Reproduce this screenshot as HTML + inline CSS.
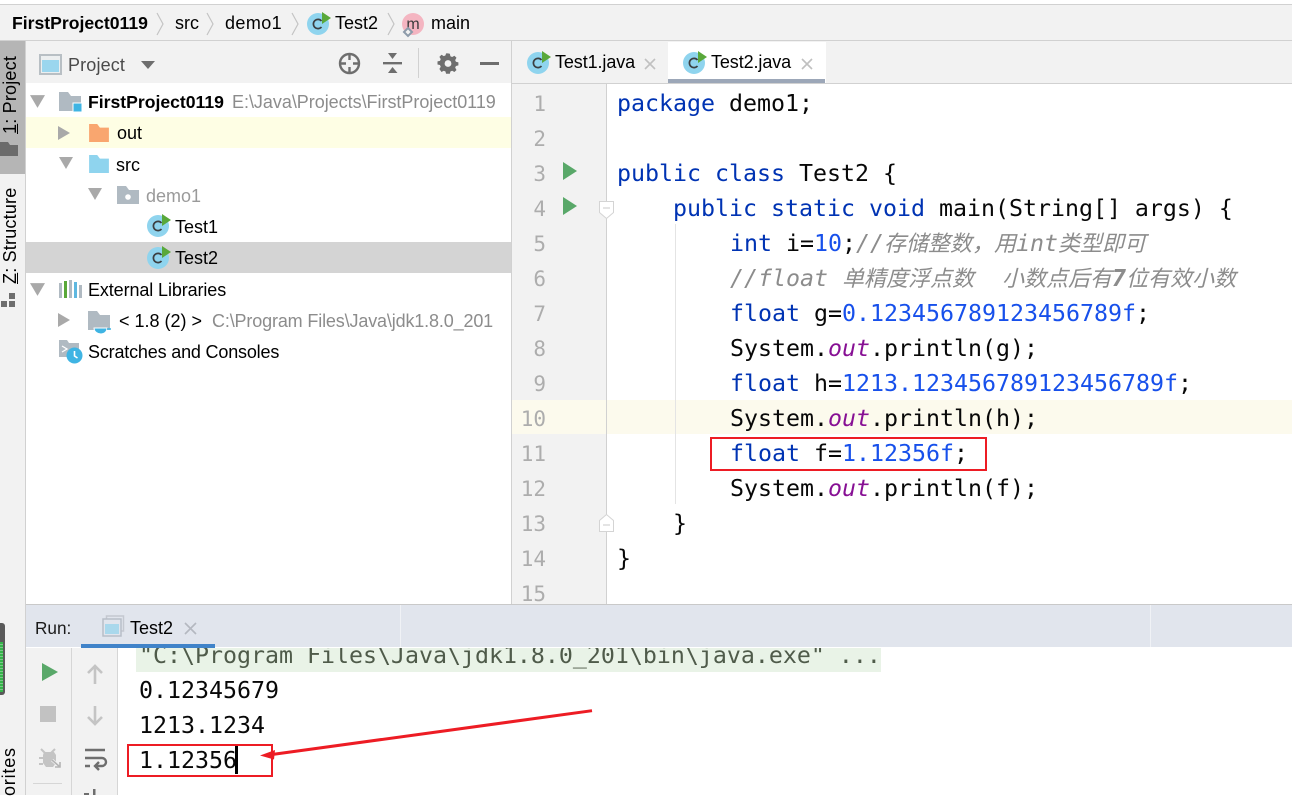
<!DOCTYPE html>
<html><head><meta charset="utf-8">
<style>
html,body{margin:0;padding:0;background:#fff}
body{width:1292px;height:795px;overflow:hidden;position:relative;font-family:"Liberation Sans","Noto Sans CJK SC",sans-serif;font-size:18px;color:#000}
.a{position:absolute}
.t{position:absolute;white-space:pre;line-height:30px;height:30px}
.g{color:#808080}
.c{position:absolute;left:0;white-space:pre;font-family:"DejaVu Sans Mono",monospace;font-size:23.26px;line-height:35px;height:35px;color:#080808}
.k{color:#0033b3}.n{color:#1750eb}.o{color:#871094;font-style:italic}
.m{color:#8c8c8c;font-style:italic}
.z{font-family:"Noto Sans CJK SC",sans-serif;font-size:22px;line-height:0;color:#8c8c8c;font-style:italic}
.ln{position:absolute;left:512px;width:34px;text-align:right;font-family:"DejaVu Sans Mono",monospace;font-size:21px;line-height:35px;color:#adadad}
.v{position:absolute;white-space:pre;transform-origin:0 0;transform:rotate(-90deg);font-size:18px;line-height:24px;letter-spacing:.2px}
svg{position:absolute;overflow:visible}
</style></head><body>
<svg width="0" height="0" style="position:absolute">
<defs>
<symbol id="cls" viewBox="0 0 24 24" overflow="visible"><circle cx="11" cy="13" r="11" fill="#8fd4ee"/><path d="M14.5 10a4.6 4.6 0 1 0 0 6" fill="none" stroke="#3c3f41" stroke-width="1.7"/><path d="M15 1l9 6-9 6z" fill="#59a83a"/></symbol>
<symbol id="fold" viewBox="0 0 22 20" overflow="visible"><path d="M0 0h9l3 4h10v16H0z" fill="currentColor"/></symbol>
<symbol id="run" viewBox="0 0 14 16" overflow="visible"><path d="M0 0l14 8-14 8z" fill="#59a869"/></symbol>
<symbol id="down" viewBox="0 0 14 12" overflow="visible"><path d="M0 0h14l-7 12z" fill="#a9a9a9"/></symbol>
<symbol id="right" viewBox="0 0 12 14" overflow="visible"><path d="M0 0l12 7-12 7z" fill="#a9a9a9"/></symbol>
</defs></svg>

<!-- top + breadcrumb -->
<div class="a" style="left:0;top:0;width:1292px;height:4px;background:#fff"></div>
<div class="a" style="left:0;top:4px;width:1292px;height:37px;background:#f2f2f2;border-top:1px solid #d1d1d1;box-sizing:border-box;border-bottom:1px solid #d1d1d1"></div>
<div class="t" style="left:12px;top:8px;font-weight:bold;font-size:17.6px">FirstProject0119</div>
<div class="t" style="left:175px;top:8px">src</div>
<div class="t" style="left:225px;top:8px;letter-spacing:.4px">demo1</div>
<div class="t" style="left:335px;top:8px">Test2</div>
<div class="t" style="left:431px;top:8px">main</div>
<svg style="left:0;top:0" width="500" height="40" fill="none" stroke="#c4c4c4" stroke-width="1.2">
<path d="M157 13l6 11-6 11M207 13l6 11-6 11M292 13l6 11-6 11M388 13l6 11-6 11"/></svg>
<svg style="left:307px;top:11px" width="24" height="24"><use href="#cls"/></svg>
<svg style="left:402px;top:13px" width="24" height="24"><circle cx="11" cy="11" r="11" fill="#f4b5c1"/><text x="11" y="16" font-family="Liberation Sans" font-size="16" text-anchor="middle" fill="#3c3c3c">m</text><path d="M2 19l4-4 4 4-4 4z" fill="#f2f2f2" stroke="#8d9baa" stroke-width="2"/></svg>

<!-- left strip -->
<div class="a" style="left:0;top:41px;width:26px;height:754px;background:#f2f2f2;border-right:1px solid #d1d1d1;box-sizing:border-box"></div>
<div class="a" style="left:0;top:41px;width:25px;height:133px;background:#b5b5b5"></div>
<div class="v" style="left:-2px;top:134px"><u>1</u>: Project</div>
<svg style="left:0;top:142px" width="18" height="14"><path d="M0 0h8l2 3h8v11H0z" fill="#6b6b6b"/></svg>
<div class="v" style="left:-2px;top:284px"><u>Z</u>: Structure</div>
<svg style="left:1px;top:292px" width="16" height="16" fill="#6e6e6e"><rect x="8" y="1" width="6" height="6"/><rect x="0" y="9" width="6" height="6"/><rect x="8" y="9" width="6" height="6"/></svg>
<div class="a" style="left:0;top:623px;width:5px;height:72px;background:#5a5a5a;border-radius:0 3px 3px 0"></div>
<div class="a" style="left:0;top:642px;width:3px;height:50px;background:repeating-linear-gradient(#35b54a 0 2px,#7cc98a 2px 3px)"></div>
<div class="v" style="left:-3px;top:796px;width:60px;letter-spacing:.8px">orites</div>

<!-- project panel -->
<div class="a" style="left:26px;top:41px;width:485px;height:42px;background:#f2f2f2"></div>
<div class="a" style="left:511px;top:41px;width:1px;height:563px;background:#d1d1d1"></div>
<svg style="left:39px;top:54px" width="23" height="21"><rect x="1" y="1" width="21" height="19" fill="#eceff0" stroke="#b8bfc4" stroke-width="2"/><rect x="3" y="6" width="17" height="12" fill="#9bd6ee"/></svg>
<div class="t g" style="left:68px;top:50px;color:#4a4a4a;letter-spacing:.15px">Project</div>
<svg style="left:141px;top:61px" width="14" height="9"><path d="M0 0h14l-7 8z" fill="#6e6e6e"/></svg>
<svg style="left:338px;top:52px" width="23" height="23" fill="none" stroke="#6e6e6e" stroke-width="2.4"><circle cx="11.5" cy="11.5" r="9.5"/><path d="M11.5 2v6M11.5 15v6M2 11.5h6M15 11.5h6"/></svg>
<svg style="left:383px;top:53px" width="20" height="22" fill="#6e6e6e"><path d="M0 9h19v2.4H0z"/><path d="M5 0h9l-4.500 6z"/><path d="M9.500 14l5 6H5z"/></svg>
<div class="a" style="left:418px;top:48px;width:1px;height:30px;background:#d1d1d1"></div>
<svg style="left:437px;top:53px" width="22" height="22"><path d="M11 1.500l2 .3.600 2.700 1.800.8 2.400-1.400 2.200 2.200-1.400 2.400.8 1.800 2.600.6v3.200l-2.600.6-.8 1.800 1.400 2.400-2.200 2.200-2.400-1.400-1.800.8-.6 2.400H9l-.6-2.400-1.800-.8-2.400 1.400L2 17.900l1.400-2.400-.8-1.800L0 13.100V9.900l2.600-.6.800-1.800L2 5.100 4.200 2.900l2.400 1.400 1.800-.8L9 1.500z" transform="translate(0.500,-1) scale(.95)" fill="#6e6e6e"/><circle cx="11" cy="10.500" r="3.400" fill="#f2f2f2"/></svg>
<div class="a" style="left:480px;top:62px;width:19px;height:3px;background:#6e6e6e"></div>

<!-- tree -->
<div class="a" style="left:26px;top:117px;width:485px;height:31px;background:#fefee4"></div>
<div class="a" style="left:26px;top:242px;width:485px;height:31px;background:#d4d4d4"></div>
<svg style="left:30px;top:95px" width="15" height="13"><use href="#down"/></svg>
<svg style="left:59px;top:92px" width="24" height="22" color="#b0bac2"><path d="M0 0h9l3 4h10v15H0z" fill="#b0bac2"/><rect x="14" y="11" width="9" height="9" fill="#3fb4e3" stroke="#fff" stroke-width="1"/></svg>
<div class="t" style="left:88px;top:87px;font-weight:bold;font-size:17.6px">FirstProject0119</div>
<div class="t" style="left:232px;top:87px;color:#8c8c8c;letter-spacing:-.03px">E:\Java\Projects\FirstProject0119</div>
<svg style="left:58px;top:126px" width="12" height="14"><use href="#right"/></svg>
<svg style="left:88px;top:124px;color:#f9a66f" width="22" height="18"><use href="#fold"/></svg>
<div class="t" style="left:117px;top:118px">out</div>
<svg style="left:59px;top:157px" width="14" height="12"><use href="#down"/></svg>
<svg style="left:88px;top:155px;color:#8fd4ee" width="22" height="18"><use href="#fold"/></svg>
<div class="t" style="left:116px;top:150px">src</div>
<svg style="left:88px;top:188px" width="14" height="12"><use href="#down"/></svg>
<svg style="left:117px;top:186px" width="22" height="18"><path d="M0 0h9l3 4h10v14H0z" fill="#b0bac2"/><circle cx="11" cy="11" r="2.800" fill="#fff"/></svg>
<div class="t" style="left:146px;top:181px;color:#9a9a9a">demo1</div>
<svg style="left:147px;top:213px" width="24" height="24"><use href="#cls"/></svg>
<div class="t" style="left:175px;top:212px">Test1</div>
<svg style="left:147px;top:245px" width="24" height="24"><use href="#cls"/></svg>
<div class="t" style="left:175px;top:243px">Test2</div>
<svg style="left:30px;top:283px" width="15" height="13"><use href="#down"/></svg>
<svg style="left:59px;top:280px" width="23" height="18"><rect x="0" y="3" width="3" height="15" fill="#b0bac2"/><rect x="5" y="1" width="3" height="17" fill="#59a83a"/><rect x="10" y="0" width="3" height="18" fill="#b0bac2"/><rect x="15" y="2" width="3" height="16" fill="#5fb8e0"/><rect x="20" y="5" width="3" height="13" fill="#b0bac2"/></svg>
<div class="t" style="left:88px;top:275px;letter-spacing:-.11px">External Libraries</div>
<svg style="left:58px;top:313px" width="12" height="14"><use href="#right"/></svg>
<svg style="left:88px;top:311px" width="24" height="24"><path d="M0 0h9l3 4h10v15H0z" fill="#b0bac2"/><path d="M6 17h13c0 4-3 6-6 6s-7-2-7-6z" fill="#3fb4e3" stroke="#fff"/><path d="M19 18h4" stroke="#3fb4e3" stroke-width="1.500"/></svg>
<div class="t" style="left:119px;top:306px">&lt; 1.8 (2) &gt;</div>
<div class="t" style="left:212px;top:306px;color:#8c8c8c;letter-spacing:-.15px">C:\Program Files\Java\jdk1.8.0_201</div>
<svg style="left:59px;top:340px" width="25" height="25"><path d="M0 0h8l2 3h10v14H0z" fill="#b0bac2"/><path d="M3 6l5 3-5 3M9 13h5" stroke="#fff" stroke-width="1.300" fill="none"/><circle cx="15.500" cy="15.500" r="8" fill="#3fb4e3"/><path d="M15.500 11v5l3 2" stroke="#fff" stroke-width="1.600" fill="none"/></svg>
<div class="t" style="left:88px;top:337px;letter-spacing:-.18px">Scratches and Consoles</div>

<!-- editor tabs -->
<div class="a" style="left:512px;top:41px;width:780px;height:43px;background:#f2f2f2;border-bottom:1px solid #d1d1d1;box-sizing:border-box"></div>
<div class="a" style="left:668px;top:42px;width:158px;height:41px;background:#fff"></div>
<div class="a" style="left:668px;top:79px;width:157px;height:4px;background:#9ca7b8"></div>
<svg style="left:527px;top:50px" width="24" height="24"><use href="#cls"/></svg>
<div class="t" style="left:555px;top:47px;letter-spacing:-.1px">Test1.java</div>
<svg style="left:644px;top:58px" width="13" height="13" stroke="#c0c0c0" stroke-width="1.600"><path d="M1 1l10 10M11 1L1 11"/></svg>
<svg style="left:683px;top:50px" width="24" height="24"><use href="#cls"/></svg>
<div class="t" style="left:711px;top:47px;letter-spacing:-.1px">Test2.java</div>
<svg style="left:801px;top:58px" width="13" height="13" stroke="#c0c0c0" stroke-width="1.600"><path d="M1 1l10 10M11 1L1 11"/></svg>

<!-- gutter -->
<div class="a" style="left:512px;top:84px;width:94px;height:520px;background:#f2f2f2"></div>
<div class="a" style="left:606px;top:84px;width:1px;height:520px;background:#d1d1d1"></div>
<div class="a" style="left:512px;top:400px;width:780px;height:34px;background:#fcfaed"></div>
<div class="a" style="left:606px;top:400px;width:1px;height:34px;background:#d1d1d1"></div>
<div class="a" style="left:675px;top:224px;width:1px;height:280px;background:#e4e4e4"></div>

<div class="ln" style="top:87px">1</div>
<div class="ln" style="top:122px">2</div>
<div class="ln" style="top:157px">3</div>
<div class="ln" style="top:192px">4</div>
<div class="ln" style="top:227px">5</div>
<div class="ln" style="top:262px">6</div>
<div class="ln" style="top:297px">7</div>
<div class="ln" style="top:332px">8</div>
<div class="ln" style="top:367px">9</div>
<div class="ln" style="top:402px">10</div>
<div class="ln" style="top:437px">11</div>
<div class="ln" style="top:472px">12</div>
<div class="ln" style="top:507px">13</div>
<div class="ln" style="top:542px">14</div>
<div class="ln" style="top:577px">15</div>
<svg style="left:563px;top:162px" width="14" height="18"><path d="M0 0l14 9-14 9z" fill="#59a869"/></svg>
<svg style="left:563px;top:197px" width="14" height="18"><path d="M0 0l14 9-14 9z" fill="#59a869"/></svg>
<svg style="left:599px;top:201px" width="15" height="19"><path d="M.5.500h14v11l-7 6-7-6z" fill="#fff" stroke="#d4d4d4"/><path d="M4 7h7" stroke="#c8c8c8"/></svg>
<svg style="left:599px;top:513px" width="15" height="19"><path d="M.5 18.500h14v-11l-7-6-7 6z" fill="#fff" stroke="#d4d4d4"/><path d="M4 12h7" stroke="#c8c8c8"/></svg>

<!-- code -->
<div class="c" style="top:86px;left:617px"><span class="k">package</span> demo1;</div>
<div class="c" style="top:156px;left:617px"><span class="k">public class</span> Test2 {</div>
<div class="c" style="top:191px;left:673px"><span class="k">public static void</span> main(String[] args) {</div>
<div class="c" style="top:226px;left:730px"><span class="k">int</span> i=<span class="n">10</span>;<span class="m">//</span><span class="z">存储整数，用</span><span class="m">int</span><span class="z">类型即可</span></div>
<div class="c" style="top:261px;left:730px"><span class="m">//float </span><span class="z">单精度浮点数</span><span class="m">  </span><span class="z">小数点后有</span><span class="m" style="font-weight:bold">7</span><span class="z">位有效小数</span></div>
<div class="c" style="top:296px;left:730px"><span class="k">float</span> g=<span class="n">0.123456789123456789f</span>;</div>
<div class="c" style="top:331px;left:730px">System.<span class="o">out</span>.println(g);</div>
<div class="c" style="top:366px;left:730px"><span class="k">float</span> h=<span class="n">1213.123456789123456789f</span>;</div>
<div class="c" style="top:401px;left:730px">System.<span class="o">out</span>.println(h);</div>
<div class="c" style="top:436px;left:730px"><span class="k">float</span> f=<span class="n">1.12356f</span>;</div>
<div class="c" style="top:471px;left:730px">System.<span class="o">out</span>.println(f);</div>
<div class="c" style="top:506px;left:673px">}</div>
<div class="c" style="top:541px;left:617px">}</div>

<!-- run bar -->
<div class="a" style="left:26px;top:604px;width:1266px;height:43px;background:#e1e5ed;border-top:1px solid #c9c9c9;box-sizing:border-box"></div>
<div class="a" style="left:400px;top:605px;width:1px;height:42px;background:#f0f2f6"></div>
<div class="a" style="left:1150px;top:605px;width:1px;height:42px;background:#f0f2f6"></div>
<div class="t" style="left:35px;top:613px;color:#1a1a1a;font-size:17.2px">Run:</div>
<svg style="left:102px;top:615px" width="22" height="22"><rect x="4.500" y="1" width="17" height="15" fill="none" stroke="#c4c8d0" stroke-width="1.500"/><rect x="1" y="4" width="18" height="17" fill="#e1e5ed" stroke="#b8bec8" stroke-width="1.500"/><rect x="3" y="9" width="14" height="10" fill="#a9d8ec"/></svg>
<div class="t" style="left:130px;top:613px">Test2</div>
<svg style="left:184px;top:622px" width="13" height="13" stroke="#b4b8c0" stroke-width="1.600"><path d="M1 1l11 11M12 1L1 12"/></svg>
<div class="a" style="left:81px;top:644px;width:134px;height:4px;background:#4083c9"></div>

<!-- console -->
<div class="a" style="left:26px;top:648px;width:92px;height:147px;background:#f2f2f2"></div>
<div class="a" style="left:71px;top:648px;width:1px;height:147px;background:#d6d6d6"></div>
<div class="a" style="left:117px;top:648px;width:1px;height:147px;background:#d6d6d6"></div>
<svg style="left:42px;top:663px" width="16" height="18"><path d="M0 0l16 9-16 9z" fill="#59a869"/></svg>
<div class="a" style="left:40px;top:706px;width:16px;height:16px;background:#c2c2c2"></div>
<svg style="left:86px;top:664px" width="18" height="20" fill="none" stroke="#c4c4c4" stroke-width="2.600"><path d="M9 20V2M2 9l7-7 7 7"/></svg>
<svg style="left:86px;top:706px" width="18" height="20" fill="none" stroke="#c4c4c4" stroke-width="2.600"><path d="M9 0v18M2 11l7 7 7-7"/></svg>
<svg style="left:39px;top:746px" width="23" height="23"><path d="M5 6h10l2 3v8l-3 4H7l-3-4V9z" fill="#c4c4c4"/><path d="M2 3l4 4M16 3l-4 4M0 12h4M0 18h4" stroke="#c4c4c4" stroke-width="2"/><path d="M13 14l8 7M21 15v6h-6" stroke="#f2f2f2" stroke-width="3" fill="none"/><path d="M13 14l8 7M21 16v5h-5" stroke="#b4b4b4" stroke-width="1.600" fill="none"/></svg>
<svg style="left:84px;top:748px" width="23" height="22" fill="none" stroke="#6e6e6e" stroke-width="2.400"><path d="M1 2h20M1 10h17a3.500 3.500 0 0 1 0 8h-6M1 18h5M15 14l-4 4 4 4"/></svg>
<div class="a" style="left:33px;top:783px;width:29px;height:1px;background:#d6d6d6"></div>
<svg style="left:84px;top:789px" width="22" height="6" fill="#6e6e6e"><rect x="9" y="0" width="2.500" height="6"/><rect x="0" y="4" width="5" height="2"/></svg>

<div class="a" style="left:118px;top:648px;width:1174px;height:147px;background:#fff;overflow:hidden">
<div class="a" style="left:18px;top:0;width:745px;height:24px;background:#e9f3e7"></div>
<div class="c" style="left:21px;top:-10px;color:#4f5b4a">"C:\Program Files\Java\jdk1.8.0_201\bin\java.exe" ...</div>
<div class="c" style="left:21px;top:25px">0.12345679</div>
<div class="c" style="left:21px;top:60px">1213.1234</div>
<div class="c" style="left:21px;top:95px">1.12356</div>
</div>
<div class="a" style="left:235px;top:746px;width:3px;height:28px;background:#000"></div>

<!-- annotations -->
<div class="a" style="left:710px;top:437px;width:277px;height:34px;border:2px solid #ed1c24;box-sizing:border-box"></div>
<div class="a" style="left:127px;top:744px;width:146px;height:33px;border:2px solid #ed1c24;box-sizing:border-box"></div>
<svg style="left:0;top:0" width="1292" height="795"><path d="M592 710.700L272 754.500" stroke="#ed1c24" stroke-width="3" fill="none"/><path d="M260 755.500L275 750 274 759.500z" fill="#ed1c24"/></svg>
</body></html>
